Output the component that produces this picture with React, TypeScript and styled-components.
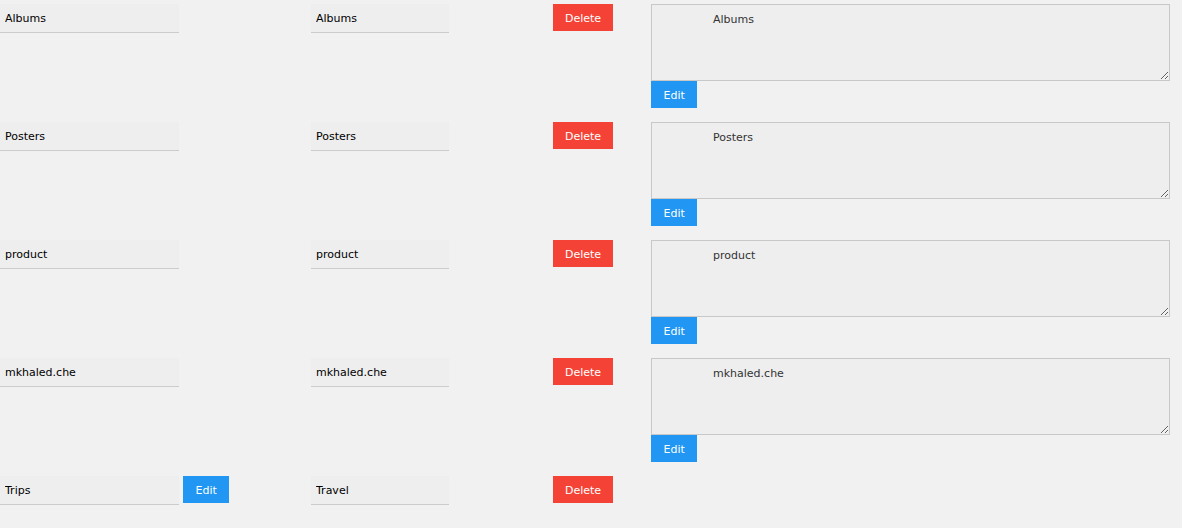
import React from "react";
import styled, { createGlobalStyle } from "styled-components";

const GlobalStyle = createGlobalStyle`
  html, body {
    margin: 0;
    padding: 0;
    background-color: #f1f1f1;
    font-family: "DejaVu Sans", Verdana, sans-serif;
  }
`;

const Page = styled.div`
  display: flex;
  flex-direction: column;
  gap: 14px;
  padding-top: 4px;
`;

const Row = styled.div`
  display: grid;
  grid-template-columns: 311px 242px 98px 519px;
  align-items: start;
`;

const NameCell = styled.div`
  display: flex;
  align-items: flex-start;
  gap: 4px;
`;

const TextInput = styled.input<{ $width: number }>`
  box-sizing: border-box;
  width: ${({ $width }) => $width}px;
  height: 29px;
  margin: 0;
  padding: 0 5px;
  border: none;
  border-bottom: 1px solid #cccccc;
  background-color: #eeeeee;
  font-family: "DejaVu Sans", Verdana, sans-serif;
  font-size: 11px;
  color: #000;
  outline: none;
`;

const Button = styled.button<{ $variant: "edit" | "delete" }>`
  box-sizing: border-box;
  height: 27px;
  margin: 0;
  padding: ${({ $variant }) => ($variant === "delete" ? "1px 12px 0" : "1px 12.5px 0")};
  border: none;
  cursor: pointer;
  color: #ffffff;
  font-family: "DejaVu Sans", Verdana, sans-serif;
  font-size: 11px;
  background-color: ${({ $variant }) =>
    $variant === "delete" ? "#f44336" : "#2196f3"};
`;

const EditorCell = styled.div`
  display: flex;
  flex-direction: column;
  align-items: flex-start;
`;

const Description = styled.textarea`
  display: block;
  box-sizing: border-box;
  width: 519px;
  height: 77px;
  margin: 0;
  padding: 8px 8px 8px 61px;
  border: 1px solid #c8c8c8;
  background-color: #eeeeee;
  color: #333333;
  font-family: "DejaVu Sans", Verdana, sans-serif;
  font-size: 11px;
  line-height: 13px;
  outline: none;
`;

interface Category {
  name: string;
  slug: string;
  editing: boolean;
}

const categories: Category[] = [
  { name: "Albums", slug: "Albums", editing: true },
  { name: "Posters", slug: "Posters", editing: true },
  { name: "product", slug: "product", editing: true },
  { name: "mkhaled.che", slug: "mkhaled.che", editing: true },
  { name: "Trips", slug: "Travel", editing: false },
];

export default function App() {
  return (
    <>
      <GlobalStyle />
      <Page>
        {categories.map((cat) => (
          <Row key={cat.name}>
            <NameCell>
              <TextInput $width={179} defaultValue={cat.name} />
              {!cat.editing && <Button $variant="edit">Edit</Button>}
            </NameCell>
            <div>
              <TextInput $width={138} defaultValue={cat.slug} />
            </div>
            <div>
              <Button $variant="delete">Delete</Button>
            </div>
            {cat.editing && (
              <EditorCell>
                <Description defaultValue={cat.name} />
                <Button $variant="edit">Edit</Button>
              </EditorCell>
            )}
          </Row>
        ))}
      </Page>
    </>
  );
}
